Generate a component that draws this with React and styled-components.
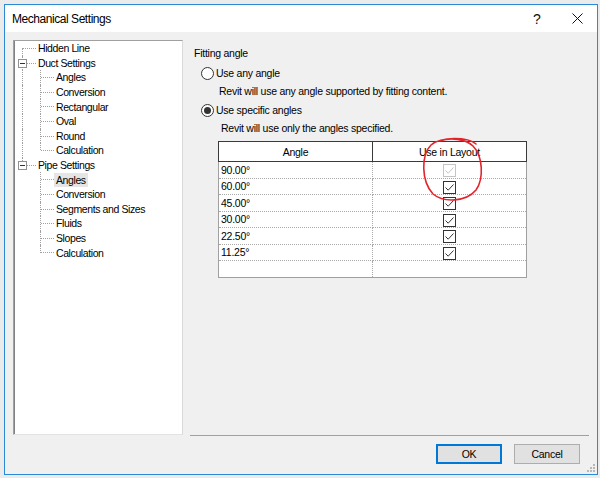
import React from 'react';
import styled, { createGlobalStyle } from 'styled-components';

const GlobalStyle = createGlobalStyle`
  html, body { margin:0; padding:0; }
  body {
    width:600px;
    height:478px;
    overflow:hidden;
    background:#ebebeb;
    font-family:"Liberation Sans", Arial, sans-serif;
    font-size:10.5px;
    letter-spacing:-0.25px;
    color:#000;
  }
`;

const treeData = [
  { label: 'Hidden Line' },
  { label: 'Duct Settings', children: ['Angles', 'Conversion', 'Rectangular', 'Oval', 'Round', 'Calculation'] },
  { label: 'Pipe Settings', children: ['Angles', 'Conversion', 'Segments and Sizes', 'Fluids', 'Slopes', 'Calculation'] },
];

// flatten the tree into rows with connector cells
const buildRows = () => {
  const rows = [];
  treeData.forEach((item, i) => {
    const last = i === treeData.length - 1;
    rows.push({
      label: item.label,
      cells: [{ top: i > 0, bottom: !last, h: true, toggle: !!item.children }],
    });
    (item.children || []).forEach((c, j) => {
      const lastChild = j === item.children.length - 1;
      rows.push({
        label: c,
        selected: last && j === 0,
        cells: [
          { top: !last, bottom: !last, h: false },
          { top: true, bottom: !lastChild, h: true },
        ],
      });
    });
  });
  return rows;
};

const angles = [
  { value: '90.00°', disabled: true },
  { value: '60.00°' },
  { value: '45.00°' },
  { value: '30.00°' },
  { value: '22.50°' },
  { value: '11.25°' },
];

const App = () => {
  const rows = buildRows();
  return (
    <>
      <GlobalStyle />
      <Window>
        <TitleBar>
          <Title>Mechanical Settings</Title>
          <CaptionButton>?</CaptionButton>
          <CaptionButton>
            <svg width="11" height="11" viewBox="0 0 11 11">
              <path d="M0.5 0.5 L10.5 10.5 M10.5 0.5 L0.5 10.5" stroke="#111" strokeWidth="1" />
            </svg>
          </CaptionButton>
        </TitleBar>
        <Body>
          <Main>
            <Tree>
              {rows.map((r, i) => (
                <TreeRow key={i}>
                  {r.cells.map((c, k) => (
                    <Cell key={k} $top={c.top} $bottom={c.bottom} $h={c.h}>
                      {c.toggle && <Toggle />}
                    </Cell>
                  ))}
                  <Label $selected={r.selected}>{r.label}</Label>
                </TreeRow>
              ))}
            </Tree>
            <Settings>
              <GroupTitle>Fitting angle</GroupTitle>
              <Option>
                <Radio />
                Use any angle
              </Option>
              <Hint>Revit will use any angle supported by fitting content.</Hint>
              <Option $gap>
                <Radio $checked />
                Use specific angles
              </Option>
              <Hint $indent={27}>Revit will use only the angles specified.</Hint>
              <Grid>
                <thead>
                  <tr>
                    <Th>Angle</Th>
                    <Th>Use in Layout</Th>
                  </tr>
                </thead>
                <tbody>
                  {angles.map((a) => (
                    <tr key={a.value}>
                      <Td>{a.value}</Td>
                      <Td $center>
                        <Check $disabled={a.disabled}>
                          <svg width="11" height="11" viewBox="0 0 11 11">
                            <path d="M1.5 5.5 L4.2 8.2 L9.5 2.5" fill="none" stroke="currentColor" strokeWidth="1" />
                          </svg>
                        </Check>
                      </Td>
                    </tr>
                  ))}
                  <tr>
                    <Td $tall />
                    <Td $tall />
                  </tr>
                </tbody>
              </Grid>
              <Annotation width="70" height="72" viewBox="0 0 70 72">
                <path
                  d="M58 10 C50 3, 24 2, 13 11 C3 21, 3 47, 15 60 C26 69, 48 68, 58 56 C66 45, 65 22, 55 12 C48 5, 32 3, 22 7"
                  fill="none"
                  stroke="#e3242b"
                  strokeWidth="1.6"
                  strokeLinecap="round"
                />
              </Annotation>
            </Settings>
          </Main>
          <Footer>
            <Button $primary>OK</Button>
            <Button>Cancel</Button>
          </Footer>
        </Body>
        <Grip width="9" height="9" viewBox="0 0 9 9">
          <rect x="7" y="1" width="2" height="2" fill="#b8b8b8" />
          <rect x="4" y="4" width="2" height="2" fill="#b8b8b8" />
          <rect x="7" y="4" width="2" height="2" fill="#b8b8b8" />
          <rect x="1" y="7" width="2" height="2" fill="#b8b8b8" />
          <rect x="4" y="7" width="2" height="2" fill="#b8b8b8" />
          <rect x="7" y="7" width="2" height="2" fill="#b8b8b8" />
        </Grip>
      </Window>
    </>
  );
};

const Window = styled.div`
  position:relative;
  box-sizing:border-box;
  width:594px;
  height:471px;
  margin:4px 0 0 4px;
  border:1px solid #2b8ad8;
  display:flex;
  flex-direction:column;
  background:#f0f0f0;
`;

const TitleBar = styled.div`
  height:27px;
  background:#fff;
  display:flex;
  align-items:center;
  padding-left:7px;
`;

const Title = styled.div`
  flex:1;
  font-size:12px;
  letter-spacing:-0.45px;
`;

const CaptionButton = styled.div`
  width:40px;
  height:27px;
  display:flex;
  align-items:center;
  justify-content:center;
  font-size:14px;
  letter-spacing:0;
  color:#111;
`;

const Body = styled.div`
  flex:1;
  display:flex;
  flex-direction:column;
  padding:8px 8px 0 8px;
`;

const Main = styled.div`
  display:flex;
  height:396px;
`;

const Tree = styled.div`
  box-sizing:border-box;
  width:170px;
  height:395px;
  background:#fff;
  border:1px solid;
  border-color:#a0a0a0 #dadada #e3e3e3 #a0a0a0;
  box-shadow:inset 1px 0 0 #828282;
  padding-left:1px;
  letter-spacing:-0.4px;
`;

const TreeRow = styled.div`
  display:flex;
  align-items:center;
  height:14.6px;
`;

const Cell = styled.div`
  position:relative;
  flex:none;
  width:18px;
  align-self:stretch;
  &::before{
    content:'';
    display:${(p) => (p.$top || p.$bottom ? 'block' : 'none')};
    position:absolute;
    left:7px;
    top:${(p) => (p.$top ? '0' : '50%')};
    bottom:${(p) => (p.$bottom ? '0' : '50%')};
    border-left:1px dotted #a0a0a0;
  }
  &::after{
    content:'';
    display:${(p) => (p.$h ? 'block' : 'none')};
    position:absolute;
    left:8px;
    right:-3px;
    top:7px;
    border-top:1px dotted #a0a0a0;
  }
`;

const Toggle = styled.div`
  position:absolute;
  z-index:1;
  left:3px;
  top:3px;
  box-sizing:border-box;
  width:9px;
  height:9px;
  border:1px solid #919191;
  background:#fff;
  &::after{
    content:'';
    position:absolute;
    left:1px;
    right:1px;
    top:3px;
    border-top:1px solid #333;
  }
`;

const Label = styled.span`
  margin-left:3px;
  padding:0 2px;
  line-height:14px;
  white-space:nowrap;
  background:${(p) => (p.$selected ? '#e5e5e5' : 'transparent')};
  position:relative;
  z-index:1;
`;

const Settings = styled.div`
  position:relative;
  flex:1;
  margin-left:7px;
  border-bottom:1px solid #a0a0a0;
  display:flex;
  flex-direction:column;
  align-items:flex-start;
  padding:6px 0 0 4px;
`;

const GroupTitle = styled.div`
  line-height:14px;
`;

const Option = styled.div`
  display:flex;
  align-items:center;
  gap:2px;
  line-height:14px;
  margin:${(p) => (p.$gap ? '5px' : '6px')} 0 0 7px;
`;

const Radio = styled.span`
  box-sizing:border-box;
  width:13px;
  height:13px;
  border-radius:50%;
  border:1px solid #333;
  background:#fff;
  display:flex;
  align-items:center;
  justify-content:center;
  &::after{
    content:'';
    display:${(p) => (p.$checked ? 'block' : 'none')};
    width:7px;
    height:7px;
    border-radius:50%;
    background:#333;
  }
`;

const Hint = styled.div`
  line-height:14px;
  margin:4px 0 0 ${(p) => p.$indent || 25}px;
`;

const Grid = styled.table`
  margin:6px 0 0 24px;
  width:309px;
  border-collapse:collapse;
  table-layout:fixed;
  background:#fff;
  border:1px solid #a0a0a0;
`;

const Th = styled.th`
  height:19px;
  padding:0;
  border:1px solid #3a3a3a;
  font-weight:normal;
  text-align:center;
`;

const Td = styled.td`
  height:${(p) => (p.$tall ? '16px' : '15.5px')};
  padding:0 0 0 2px;
  border:1px dotted #a9a9a9;
  text-align:${(p) => (p.$center ? 'center' : 'left')};
  vertical-align:middle;
  line-height:14px;
`;

const Check = styled.span`
  box-sizing:border-box;
  display:inline-flex;
  align-items:center;
  justify-content:center;
  width:13px;
  height:13px;
  vertical-align:middle;
  margin-left:-2px;
  border:1px solid ${(p) => (p.$disabled ? '#c4c4c4' : '#333')};
  color:${(p) => (p.$disabled ? '#c4c4c4' : '#333')};
  background:#fff;
`;

const Annotation = styled.svg`
  position:absolute;
  left:228px;
  top:94px;
  pointer-events:none;
`;

const Footer = styled.div`
  display:flex;
  justify-content:flex-end;
  gap:12px;
  padding:8px 9px 0 0;
`;

const Button = styled.div`
  box-sizing:border-box;
  width:66px;
  height:20px;
  display:flex;
  align-items:center;
  justify-content:center;
  background:#e1e1e1;
  border:${(p) => (p.$primary ? '2px solid #0078d7' : '1px solid #adadad')};
`;

const Grip = styled.svg`
  position:absolute;
  right:2px;
  bottom:2px;
`;

export default App;
